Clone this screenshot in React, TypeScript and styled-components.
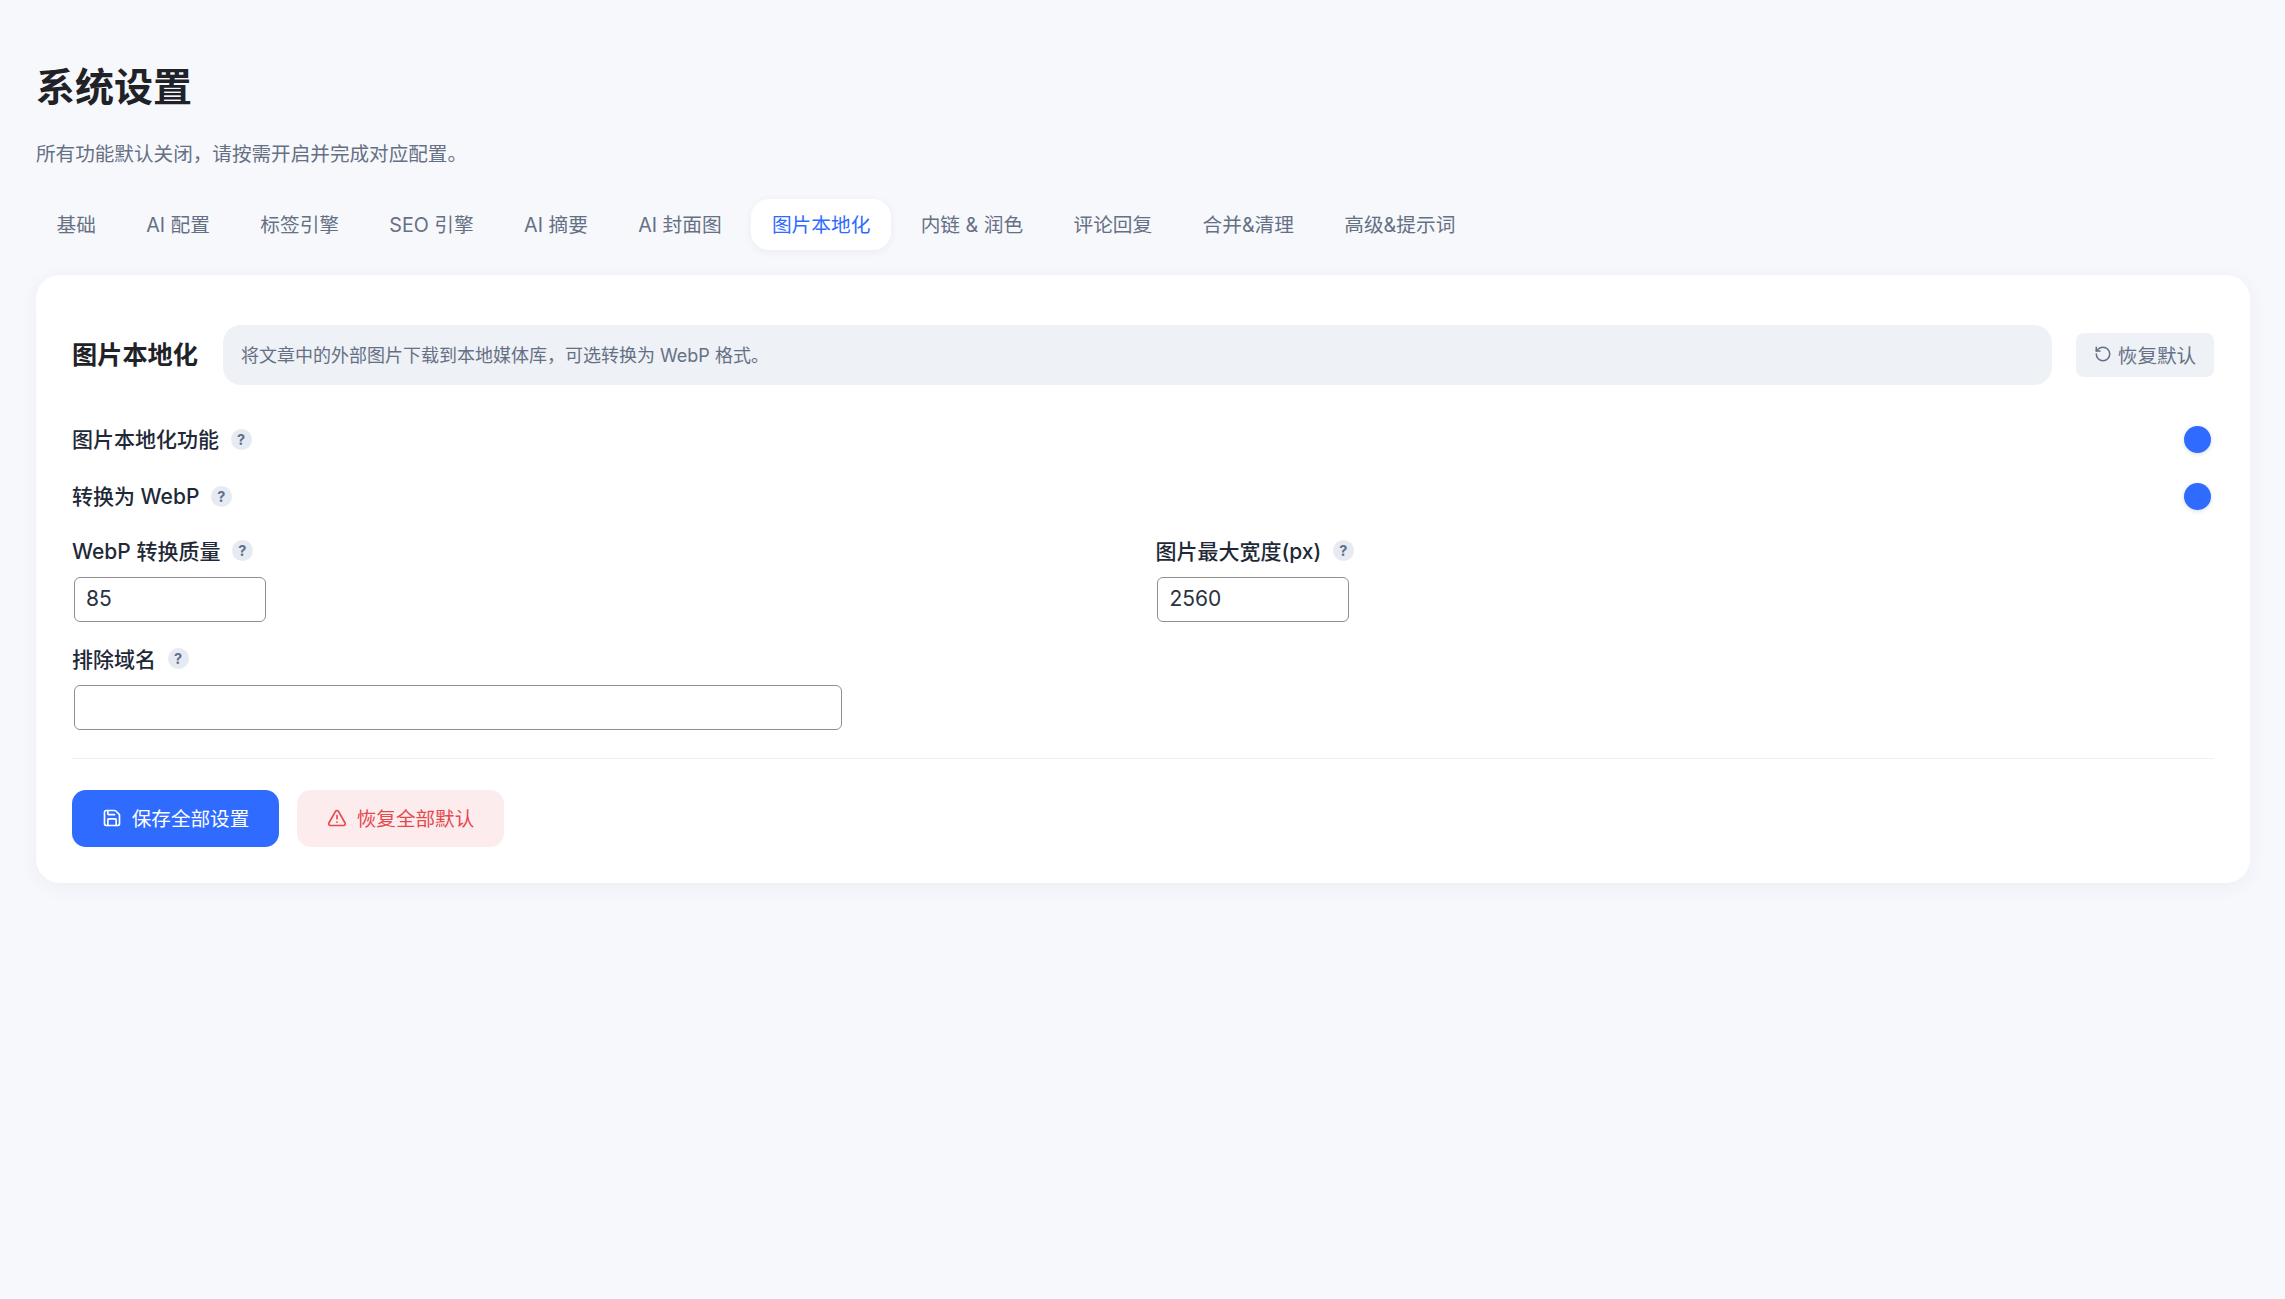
import React from 'react';
import styled, { createGlobalStyle } from 'styled-components';
import { RotateCcw, Save, TriangleAlert } from 'lucide-react';

const Global = createGlobalStyle`
  html, body { margin: 0; padding: 0; background: #f7f8fc; }
  body { font-family: Inter, "Noto Sans CJK SC", sans-serif; }
  * { box-sizing: border-box; }
`;

const Page = styled.div`
  min-height: 1299px;
  padding: 60px 35px 0 36px;
  background: #f7f8fc;
`;

const Title = styled.h1`
  margin: 0;
  font-size: 39px;
  line-height: 54px;
  font-weight: 700;
  color: #1f2328;
`;

const Subtitle = styled.p`
  margin: 26px 0 0;
  font-size: 19.6px;
  line-height: 28px;
  color: #667085;
`;

const Tabs = styled.nav`
  display: flex;
  gap: 9.3px;
  margin-top: 31px;
`;

const Tab = styled.div<{ $active?: boolean }>`
  height: 51px;
  padding: 0 20.5px 2px;
  display: flex;
  align-items: center;
  font-size: 19.7px;
  border-radius: 18px;
  white-space: nowrap;
  color: ${(p) => (p.$active ? '#2f6bff' : '#667085')};
  background: ${(p) => (p.$active ? '#ffffff' : 'transparent')};
  box-shadow: ${(p) => (p.$active ? '0 2px 8px rgba(30,50,90,0.06)' : 'none')};
`;

const Card = styled.section`
  margin-top: 25px;
  height: 608px;
  padding: 50px 36px 36px;
  background: #ffffff;
  border-radius: 24px;
  box-shadow: 0 4px 20px rgba(30, 50, 90, 0.05);
`;

const CardHead = styled.div`
  display: flex;
  align-items: center;
  margin-bottom: 26px;
`;

const CardTitle = styled.h2`
  margin: 0 25px 0 0;
  padding-bottom: 5px;
  font-size: 25.2px;
  font-weight: 600;
  color: #1f2328;
  white-space: nowrap;
`;

const Desc = styled.div`
  flex: 1;
  height: 60px;
  padding: 0 18px 2px;
  display: flex;
  align-items: center;
  font-size: 18px;
  color: #667085;
  background: #eef1f6;
  border-radius: 18px;
`;

const ResetBtn = styled.button`
  margin-left: 24px;
  width: 138px;
  height: 44px;
  padding: 0 0 2px;
  border: 0;
  border-radius: 8px;
  background: #eef1f6;
  color: #667085;
  display: flex;
  align-items: center;
  justify-content: center;
  gap: 6px;
  font: inherit;
  font-size: 19.6px;
`;

const LabelWrap = styled.div`
  display: flex;
  align-items: center;
  gap: 11.5px;
  height: 27px;
  color: #1f2937;
  font-size: 21px;
  font-weight: 500;
  white-space: nowrap;
`;

const LabelText = styled.span`
  margin-top: -2px;
`;

const ToggleRow = styled.div`
  display: flex;
  justify-content: space-between;
  align-items: center;
  height: 57px;
  padding: 0 3px 0 0;
  ${LabelText} { margin-top: -4px; }
`;

const Help = styled.span`
  width: 21px;
  height: 21px;
  border-radius: 50%;
  background: #e6eaf2;
  color: #5f6f8a;
  font-size: 14.5px;
  font-weight: 700;
  display: flex;
  align-items: center;
  justify-content: center;
`;

const ToggleKnob = styled.span`
  width: 27px;
  height: 27px;
  border-radius: 50%;
  background: #2f6bff;
  box-shadow: 0 1px 4px rgba(30, 50, 90, 0.18);
`;

const Grid = styled.div`
  display: grid;
  grid-template-columns: 1fr 1fr;
  column-gap: 25px;
  margin-top: 12px;
`;

const Field = styled.div`
  display: flex;
  flex-direction: column;
  align-items: flex-start;
  gap: 13px;
  margin-bottom: 23px;
`;

const Input = styled.input<{ $wide?: boolean }>`
  width: ${(p) => (p.$wide ? '768px' : '192px')};
  height: 45px;
  margin-left: 1.5px;
  padding: 0 11.5px 2px;
  border: 1px solid #8f8f8f;
  border-radius: 6px;
  background: #fff;
  font-family: inherit;
  font-size: 21px;
  color: #2b3240;
  outline: none;
`;

const Divider = styled.hr`
  margin: 5px 0 31px;
  border: 0;
  border-top: 1px solid #eef1f6;
`;

const Actions = styled.div`
  display: flex;
  gap: 18px;
`;

const ActionBtn = styled.button<{ $danger?: boolean }>`
  width: 207px;
  height: 57px;
  padding: 0 0 2px;
  border: 0;
  border-radius: 14px;
  display: flex;
  align-items: center;
  justify-content: center;
  gap: 10px;
  font: inherit;
  font-size: 19.6px;
  color: ${(p) => (p.$danger ? '#e5484d' : '#ffffff')};
  background: ${(p) => (p.$danger ? '#fdecee' : '#2f6bff')};
`;

const tabs = ['基础', 'AI 配置', '标签引擎', 'SEO 引擎', 'AI 摘要', 'AI 封面图', '图片本地化', '内链 & 润色', '评论回复', '合并&清理', '高级&提示词'];

const Label = ({ children }: { children: React.ReactNode }) => (
  <LabelWrap>
    <LabelText>{children}</LabelText>
    <Help>?</Help>
  </LabelWrap>
);

export default function App() {
  return (
    <Page>
      <Global />
      <Title>系统设置</Title>
      <Subtitle>所有功能默认关闭，请按需开启并完成对应配置。</Subtitle>
      <Tabs>
        {tabs.map((t) => (
          <Tab key={t} $active={t === '图片本地化'}>{t}</Tab>
        ))}
      </Tabs>
      <Card>
        <CardHead>
          <CardTitle>图片本地化</CardTitle>
          <Desc>将文章中的外部图片下载到本地媒体库，可选转换为 WebP 格式。</Desc>
          <ResetBtn><RotateCcw size={18} />恢复默认</ResetBtn>
        </CardHead>
        <ToggleRow>
          <Label>图片本地化功能</Label>
          <ToggleKnob />
        </ToggleRow>
        <ToggleRow>
          <Label>转换为 WebP</Label>
          <ToggleKnob />
        </ToggleRow>
        <Grid>
          <Field>
            <Label>WebP 转换质量</Label>
            <Input defaultValue="85" />
          </Field>
          <Field>
            <Label>图片最大宽度(px)</Label>
            <Input defaultValue="2560" />
          </Field>
          <Field>
            <Label>排除域名</Label>
            <Input $wide defaultValue="" />
          </Field>
        </Grid>
        <Divider />
        <Actions>
          <ActionBtn><Save size={20} />保存全部设置</ActionBtn>
          <ActionBtn $danger><TriangleAlert size={20} />恢复全部默认</ActionBtn>
        </Actions>
      </Card>
    </Page>
  );
}
